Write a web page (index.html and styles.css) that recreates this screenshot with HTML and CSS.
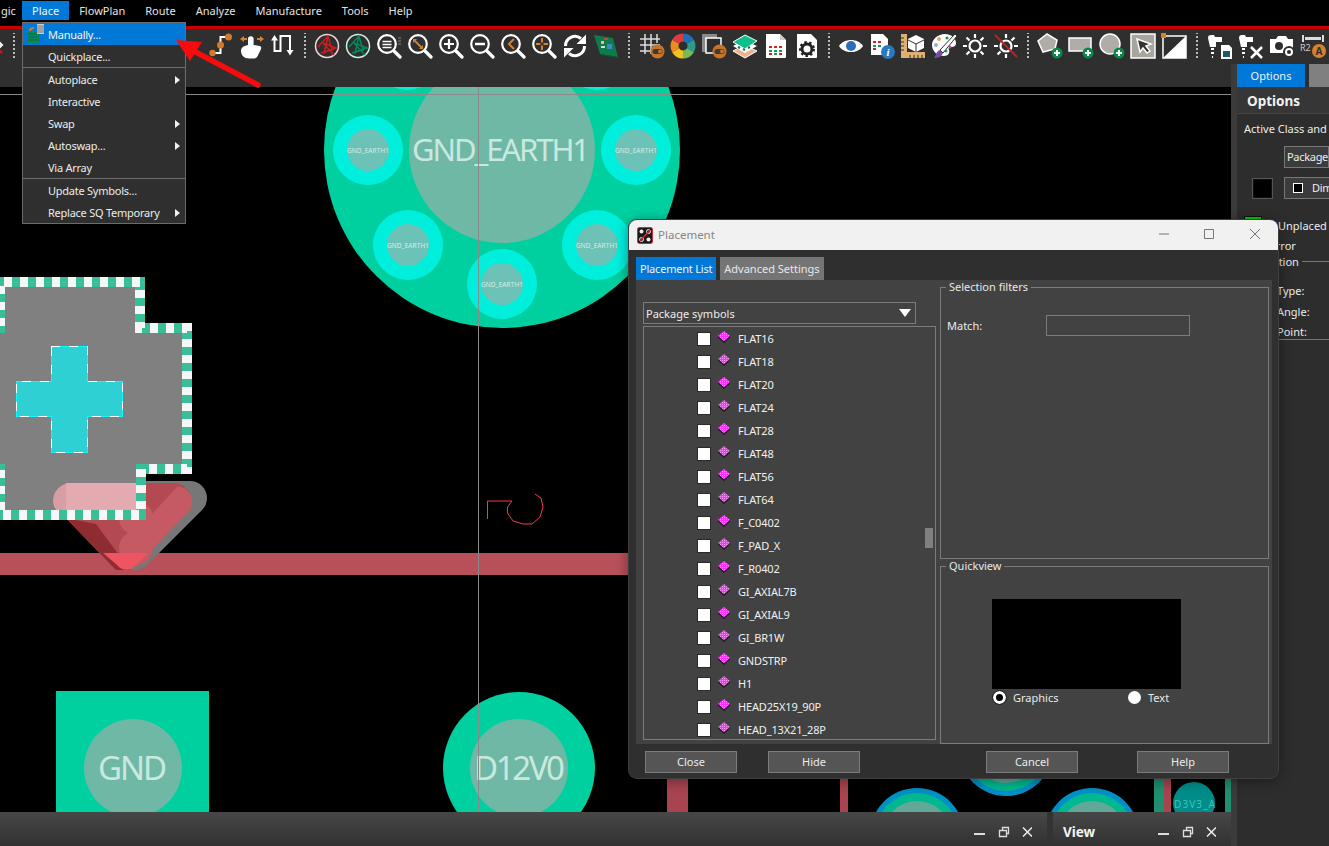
FILE: index.html
```html
<!DOCTYPE html>
<html lang="en">
<head>
<meta charset="utf-8">
<title>Placement</title>
<link rel="stylesheet" href="styles.css">
</head>
<body>
<svg class="defs" aria-hidden="true">
  <defs>
    <pattern id="dither" width="2" height="2" patternUnits="userSpaceOnUse">
      <rect width="2" height="2" fill="#ff30ff"/><rect width="1" height="1" fill="#ff90ff"/>
    </pattern>
    <symbol id="pkg" viewBox="0 0 12 12">
      <path d="M0 6.500 6 12l6-5.500V5H0z" fill="#111"/>
      <path d="M6 0l6 5-6 5.500L0 5z" fill="url(#dither)"/>
    </symbol>
    <symbol id="mag" viewBox="0 0 26 26">
      <circle cx="11" cy="11" r="8.800" fill="none" stroke="#fff" stroke-width="2.200"/>
      <path d="M18 18l6 6" stroke="#fff" stroke-width="3.200" stroke-linecap="round"/>
    </symbol>
    <symbol id="plus" viewBox="0 0 26 26">
      <circle cx="20" cy="20" r="5.500" fill="#0a8a4a"/>
      <path d="M17 20h6M20 17v6" stroke="#fff" stroke-width="2"/>
    </symbol>
    <symbol id="toggle" viewBox="0 0 26 26">
      <circle cx="18.500" cy="18.500" r="7" fill="#c87428"/>
      <rect x="13.500" y="16" width="10" height="5" rx="2.500" fill="#3a3a3a"/>
      <circle cx="21" cy="18.500" r="2" fill="#c87428"/>
    </symbol>
  </defs>
</svg>

<div class="app">
  <nav class="menubar">
    <span class="menubar-item menubar-first">gic</span>
    <span class="menubar-item menubar-active">Place</span>
    <span class="menubar-item">FlowPlan</span>
    <span class="menubar-item">Route</span>
    <span class="menubar-item">Analyze</span>
    <span class="menubar-item">Manufacture</span>
    <span class="menubar-item">Tools</span>
    <span class="menubar-item">Help</span>
  </nav>
  <div class="redline"></div>

  <div class="toolbar">
    <span class="cut-icon"><svg width="14" height="26" viewBox="0 0 14 26"><path d="M-4 6l6 6-6 6" fill="none" stroke="#fff" stroke-width="2"/><path d="M-4 14l6 6" stroke="#d01818" stroke-width="2"/></svg></span>
    <i class="tsep"></i>
    <span class="tool tool-after-menu"><svg class="ico" viewBox="0 0 26 26"><path d="M6.500 20h6v-8" fill="none" stroke="#fff" stroke-width="2"/><path d="M12.500 9V4h6" fill="none" stroke="#fff" stroke-width="2"/><circle cx="4.500" cy="20" r="3.200" fill="#d07a2a"/><circle cx="12.500" cy="12" r="3.500" fill="#d07a2a"/><circle cx="20.500" cy="4" r="3.500" fill="#d07a2a"/></svg></span>
    <span class="tool"><svg class="ico" viewBox="0 0 26 26"><path d="M1 6l4-3v2h3v2H5v2zM25 6l-4-3v2h-3v2h3v2z" fill="#d8812c"/><path d="M9 6a2.800 2.800 0 0 1 5.600 0v6l6 1c2 .5 2 2 1 4l-3 6c-1 2-2 2.500-5 2.500H10C5 25.500 2 22 2 18c0-3 2-5 7-6z" fill="#fff"/></svg></span>
    <span class="tool"><svg class="ico" viewBox="0 0 26 26"><path d="M4.500 6V18H10.500V3H20V18" fill="none" stroke="#fff" stroke-width="2"/><path d="M1 7.500h7L4.500 2zM16.500 17h7L20 22.500z" fill="#fff"/></svg></span>
    <i class="tsep"></i>
    <span class="tool"><svg class="ico" viewBox="0 0 26 26"><circle cx="13" cy="13" r="11.500" fill="#2e2e2e" stroke="#f2d6d6" stroke-width="1.500"/><path d="M4 14L14 3l4 14L7 20l15-5L9 10l11 12M14 3l-4 18" fill="none" stroke="#cc1b23" stroke-width="1.500"/></svg></span>
    <span class="tool"><svg class="ico" viewBox="0 0 26 26"><circle cx="13" cy="13" r="11.500" fill="#2e2e2e" stroke="#d2efe2" stroke-width="1.500"/><path d="M4 14L14 3l4 14L7 20l15-5L9 10l11 12M14 3l-4 18" fill="none" stroke="#008a5a" stroke-width="1.500"/></svg></span>
    <span class="tool"><svg class="ico" viewBox="0 0 26 26"><use href="#mag"/><path d="M6.500 8.500h9M6.500 11.500h9M6.500 14.500h9" stroke="#fff" stroke-width="1.500"/><path d="M22 5h3M22 8h3M22 11h3" stroke="#888" stroke-width="1"/></svg></span>
    <span class="tool"><svg class="ico" viewBox="0 0 26 26"><use href="#mag"/><path d="M7 7l8 8" stroke="#d8812c" stroke-width="1.800"/><path d="M6 6h4L6 10zM16 16h-4l4-4z" fill="#d8812c"/></svg></span>
    <span class="tool"><svg class="ico" viewBox="0 0 26 26"><use href="#mag"/><path d="M6 11h10M11 6v10" stroke="#fff" stroke-width="2.200"/></svg></span>
    <span class="tool"><svg class="ico" viewBox="0 0 26 26"><use href="#mag"/><path d="M6 11h10" stroke="#fff" stroke-width="2.500"/></svg></span>
    <span class="tool"><svg class="ico" viewBox="0 0 26 26"><use href="#mag"/><path d="M14 6l-5 5 5 5" fill="none" stroke="#d8812c" stroke-width="2"/></svg></span>
    <span class="tool"><svg class="ico" viewBox="0 0 26 26"><use href="#mag"/><path d="M5 11h4.500M12.500 11H17M11 5v4.500M11 12.500V17" stroke="#d8812c" stroke-width="2"/></svg></span>
    <span class="tool"><svg class="ico" viewBox="0 0 26 26"><path d="M3.500 13A9.500 9.500 0 0 1 19 5.500M22.500 13A9.500 9.500 0 0 1 7 20.500" fill="none" stroke="#fff" stroke-width="3"/><path d="M24 1.500V11H14.500zM2 24.500V15h9.500z" fill="#fff"/></svg></span>
    <span class="tool"><svg class="ico" viewBox="0 0 26 26"><path d="M1 2l19 3 5 19-18-3z" fill="#0e7a4e"/><path d="M7 21l18 3v1L7 22z" fill="#0a5a38"/><rect x="8" y="8" width="3" height="3" fill="#e8c840"/><rect x="14" y="11" width="5" height="5" fill="#3a8ac8"/><rect x="11" y="5" width="4" height="2" fill="#c84838"/><rect x="8" y="13" width="4" height="2" fill="#d8d8d8"/></svg></span>
    <i class="tsep tsep-wide"></i>
    <span class="tool"><svg class="ico" viewBox="0 0 26 26"><path d="M1 6h20M1 12h20M1 18h12M6 1v20M12 1v20M18 1v9" stroke="#ddd" stroke-width="1.500"/><use href="#toggle"/></svg></span>
    <span class="tool"><svg class="ico" viewBox="0 0 26 26"><g fill="none" stroke-width="8" transform="rotate(-90 13 13)"><circle cx="13" cy="13" r="8.500" stroke="#1f6fb8" pathLength="6" stroke-dasharray="1 5"/><circle cx="13" cy="13" r="8.500" stroke="#2f9a8a" pathLength="6" stroke-dasharray="1 5" stroke-dashoffset="-1"/><circle cx="13" cy="13" r="8.500" stroke="#72bc5c" pathLength="6" stroke-dasharray="1 5" stroke-dashoffset="-2"/><circle cx="13" cy="13" r="8.500" stroke="#f2c020" pathLength="6" stroke-dasharray="1 5" stroke-dashoffset="-3"/><circle cx="13" cy="13" r="8.500" stroke="#ee8a20" pathLength="6" stroke-dasharray="1 5" stroke-dashoffset="-4"/><circle cx="13" cy="13" r="8.500" stroke="#e03a40" pathLength="6" stroke-dasharray="1 5" stroke-dashoffset="-5"/></g><circle cx="13" cy="13" r="3" fill="#2e2e2e"/></svg></span>
    <span class="tool"><svg class="ico" viewBox="0 0 26 26"><rect x="1" y="1" width="15" height="18" fill="#8a8a8a"/><rect x="5" y="5" width="15" height="15" fill="#2e2e2e" stroke="#fff" stroke-width="1.500"/><use href="#toggle"/></svg></span>
    <span class="tool"><svg class="ico" viewBox="0 0 26 26"><path d="M1 18l11-6 13 6-12 7z" fill="#eeb28c" stroke="#fff"/><path d="M1 13l11-6 13 6-12 7z" fill="#fff"/><path d="M1 9l12-7 12 6-12 8z" fill="#0cbf8c" stroke="#fff"/><path d="M6 14l2 1M11 16l2 1M16 15l2-1" stroke="#0a7a58" stroke-width="2"/></svg></span>
    <span class="tool"><svg class="ico" viewBox="0 0 26 26"><path d="M3 1h14l6 6v17a1 1 0 0 1-1 1H3z" fill="#fff"/><path d="M17 1v6h6" fill="#ccc"/><path d="M6 13h3v2H6zM11 13h3v2h-3zM16 13h3v2h-3zM6 20h3v2H6zM16 20h3v2h-3z" fill="#d02020"/><path d="M6 17h3v2H6zM11 17h3v2h-3zM16 17h3v2h-3zM11 20h3v2h-3z" fill="#1a9a50"/></svg></span>
    <span class="tool"><svg class="ico" viewBox="0 0 26 26"><path d="M3 1h14l6 6v17a1 1 0 0 1-1 1H3z" fill="#fff"/><circle cx="13" cy="16" r="5" fill="none" stroke="#222" stroke-width="3"/><circle cx="13" cy="16" r="7" fill="none" stroke="#222" stroke-width="2" stroke-dasharray="2.500 2.500"/></svg></span>
    <i class="tsep"></i>
    <span class="tool"><svg class="ico" viewBox="0 0 26 26"><path d="M1 13C6 5 20 5 25 13 20 21 6 21 1 13z" fill="#fff"/><circle cx="13" cy="13" r="5" fill="#2a6fb8"/></svg></span>
    <span class="tool"><svg class="ico" viewBox="0 0 26 26"><path d="M2 1h12l5 5v16H2z" fill="#fff"/><path d="M4 8h3v2H4zM9 8h3v2H9zM4 15h3v2H4z" fill="#d02020"/><path d="M4 12h3v2H4zM9 12h3v2H9z" fill="#1a9a50"/><circle cx="19" cy="19" r="7" fill="#2a78c0"/><text class="info-i" x="19" y="23">i</text></svg></span>
    <span class="tool"><svg class="ico" viewBox="0 0 26 26"><path d="M1 1h6v18h18v6H1z" fill="#e0b070"/><path d="M1 5h3M1 9h3M1 13h3M1 17h3M10 25v-3M14 25v-3M18 25v-3M22 25v-3" stroke="#333"/><path d="M16 2l8 4v9l-8 4-8-4V6z" fill="#fff"/><path d="M16 11v8M8 7l8 4 8-4" stroke="#333" fill="none"/></svg></span>
    <span class="tool"><svg class="ico" viewBox="0 0 26 26"><path d="M14 1c6 0 11 4 11 9 0 3-2 4-5 4-2 0-3 1-2 3 1 3-1 6-5 6C6 23 1 18 1 12S7 1 14 1z" fill="#fff"/><path d="M24 1L9 17l3 3L26 3z" fill="#fff" stroke="#2e2e2e"/><path d="M9 17l3 3c-1 3-4 5-9 5 2-2 2-7 6-8z" fill="#7a4aa8"/><circle cx="8" cy="6" r="2" fill="#d8a860"/><circle cx="16" cy="5" r="1.500" fill="#0a9a60"/><circle cx="5" cy="12" r="2" fill="#9ab0d0"/><circle cx="19" cy="14" r="1.500" fill="#b050b0"/><circle cx="15" cy="18" r="1.500" fill="#0a9a60"/></svg></span>
    <span class="tool"><svg class="ico" viewBox="0 0 26 26"><circle cx="13" cy="13" r="5.500" fill="none" stroke="#fff" stroke-width="2.200"/><path d="M13 1v4M13 21v4M1 13h4M21 13h4M4.500 4.500l3 3M18.500 18.500l3 3M21.500 4.500l-3 3M7.500 18.500l-3 3" stroke="#fff" stroke-width="2.200"/></svg></span>
    <span class="tool"><svg class="ico" viewBox="0 0 26 26"><circle cx="13" cy="13" r="5.500" fill="none" stroke="#fff" stroke-width="2.200"/><path d="M13 1v4M13 21v4M1 13h4M21 13h4M21.500 4.500l-3 3M7.500 18.500l-3 3" stroke="#fff" stroke-width="2.200"/><path d="M2 2l22 22" stroke="#cc1b23" stroke-width="2"/></svg></span>
    <i class="tsep"></i>
    <span class="tool"><svg class="ico" viewBox="0 0 26 26"><path d="M10 1l10 6-2 9-12 3-5-11z" fill="#b0aca8" stroke="#fff" stroke-width="1.500"/><use href="#plus"/></svg></span>
    <span class="tool"><svg class="ico" viewBox="0 0 26 26"><rect x="1" y="5" width="22" height="13" fill="#b0aca8" stroke="#fff" stroke-width="1.500"/><use href="#plus"/></svg></span>
    <span class="tool"><svg class="ico" viewBox="0 0 26 26"><circle cx="11" cy="11" r="10" fill="#b0aca8" stroke="#fff" stroke-width="1.500"/><use href="#plus"/></svg></span>
    <span class="tool"><svg class="ico" viewBox="0 0 26 26"><rect x="1" y="1" width="24" height="24" fill="#a8a49e" stroke="#fff" stroke-width="1.500"/><path d="M7 6l14 5-5 2 4 5-3 2-4-5-3 4z" fill="#333" stroke="#fff" stroke-width="1.500"/></svg></span>
    <span class="tool"><svg class="ico" viewBox="0 0 26 26"><path d="M2 3h23v22H2z" fill="#2e2e2e" stroke="#fff" stroke-width="1.500"/><path d="M25 3v22H2z" fill="#fff"/><rect x="0" y="0" width="5" height="5" fill="#d8812c"/></svg></span>
    <i class="tsep tsep-wide"></i>
    <span class="tool"><svg class="ico" viewBox="0 0 26 26"><path d="M1 5c0-2 1-3 3-3h3l1 2h7v5H9v5H3z" fill="#fff"/><path d="M4 15h3v2H4zM4 19h3v2H4zM5 23h1v2H5z" fill="#fff"/><path d="M14 12h8l3 3v11H14z" fill="#fff"/><path d="M16 18h7v6h-7z" fill="#1a5a6a"/></svg></span>
    <span class="tool"><svg class="ico" viewBox="0 0 26 26"><path d="M1 5c0-2 1-3 3-3h3l1 2h7v5H9v5H3z" fill="#fff"/><path d="M4 15h3v2H4zM4 19h3v2H4zM5 23h1v2H5z" fill="#fff"/><path d="M13 14l11 11M24 14L13 25" stroke="#fff" stroke-width="2.500"/></svg></span>
    <span class="tool"><svg class="ico" viewBox="0 0 26 26"><path d="M1 6h6l2-3h8l2 3h5v14H1z" fill="#fff"/><circle cx="10" cy="13" r="4" fill="#2e2e2e"/><circle cx="20" cy="19" r="6" fill="#2e2e2e"/><circle cx="20" cy="19" r="3" fill="none" stroke="#fff" stroke-width="2"/></svg></span>
    <span class="tool"><svg class="ico" viewBox="0 0 26 26"><path d="M2 2h2v7H2zM22 2h2v7h-2zM5 4h16v3H5z" fill="#ddd"/><text class="r2-text" x="0" y="18">R2</text><circle cx="19" cy="18" r="7" fill="#d8812c"/><text class="a-text" x="19" y="22">A</text></svg></span>
  </div>

  <div class="workspace">
    <div class="center">
      <div class="canvas">
        <svg class="board" width="1231" height="725" viewBox="0 87 1231 725">
          <rect x="0" y="87" width="1231" height="725" fill="#000"/>
          <!-- large mounting pad -->
          <circle cx="502" cy="150" r="178" fill="#00d0a0"/>
          <circle cx="502" cy="150" r="93" fill="#6fb8a6"/>
          <g fill="#00efdd">
            <circle cx="407" cy="55" r="35"/><circle cx="597" cy="55" r="35"/>
            <circle cx="368" cy="150" r="35"/><circle cx="636" cy="150" r="35"/>
            <circle cx="408" cy="245" r="35"/><circle cx="597" cy="245" r="35"/>
            <circle cx="502" cy="284" r="35"/>
          </g>
          <g fill="#6dc2b8">
            <circle cx="368" cy="150" r="21"/><circle cx="636" cy="150" r="21"/>
            <circle cx="408" cy="245" r="21"/><circle cx="597" cy="245" r="21"/>
            <circle cx="502" cy="284" r="21"/>
          </g>
          <text class="pad-big" x="412" y="161" textLength="178">GND_EARTH1</text>
          <g class="pad-tiny">
            <text x="347" y="153" textLength="42">GND_EARTH1</text>
            <text x="615" y="153" textLength="42">GND_EARTH1</text>
            <text x="387" y="248" textLength="42">GND_EARTH1</text>
            <text x="576" y="248" textLength="42">GND_EARTH1</text>
            <text x="481" y="287" textLength="42">GND_EARTH1</text>
          </g>

          <!-- trace and triangular copper -->
          <rect x="0" y="553" width="640" height="22" fill="#b8505a"/>
          <path d="M100 498H190L135 553z" fill="#777" stroke="#777" stroke-width="34" stroke-linejoin="round"/>
          <path d="M72 500h102l-51 53z" fill="#b34a52" stroke="#b34a52" stroke-width="34" stroke-linejoin="round"/>
          <path d="M66 518l50 52h14l-34-46z" fill="#8e2c32"/>
          <path d="M178 486a16 16 0 0 1 12 24L142 560l-18-16z" fill="#c55a63"/>
          <circle cx="136" cy="518" r="17" fill="#c55a63"/>
          <circle cx="136" cy="548" r="17" fill="#c55a63"/>
          <path d="M103 553h45l-12 12a12 12 0 0 1-19 0z" fill="#ee5560"/>

          <!-- plus-shaped pad -->
          <path d="M-30 328H0V282H140V328H187V469H141V515H0V469H-30Z" fill="#808080"/>
          <path d="M53 501a18 18 0 0 1 18-18H136V518H71a18 18 0 0 1-18-18z" fill="#d79ea3"/>
          <path d="M66 483H136V518H66z" fill="#e3abb1"/>
          <path d="M-30 328H0V282H140V328H187V469H141V515H0V469H-30Z" fill="none" stroke="#38bf98" stroke-width="10"/>
          <path d="M-30 328H0V282H140V328H187V469H141V515H0V469H-30Z" fill="none" stroke="#f6f6f6" stroke-width="10" stroke-dasharray="8 8"/>
          <path class="crisp" d="M51 346H87V381H122V416H87V452H51V416H16V381H51Z" fill="#2ed0d4" stroke="#0ff"/>
          <path class="crisp" d="M51 346H87V381H122V416H87V452H51V416H16V381H51Z" fill="none" stroke="#fff" stroke-dasharray="9 9"/>

          <!-- cursor ghost -->
          <path d="M487.500 519V501H512L507.500 507V513L513 521 523 524 532 524 540 517 543 507 541 498 535 494" fill="none" stroke="#f43c4c" stroke-width="1"/>

          <!-- lower pads -->
          <rect x="56" y="691" width="153" height="125" fill="#00d0a0"/>
          <circle cx="133" cy="768" r="49" fill="#6fb8a6"/>
          <text class="pad-mid" x="98" y="780" textLength="69">GND</text>
          <circle cx="519" cy="768" r="76" fill="#00d0a0"/>
          <circle cx="519" cy="768" r="49" fill="#6fb8a6"/>
          <text class="pad-mid" x="474" y="780" textLength="91">D12V0</text>

          <rect x="667" y="770" width="21" height="45" fill="#a84450"/>
          <rect x="840" y="770" width="8" height="45" fill="#a84450"/>
          <g>
            <circle cx="917" cy="835" r="47" fill="#0090c8"/><circle cx="917" cy="835" r="42" fill="#00b890"/><circle cx="917" cy="835" r="34" fill="#62a896"/>
            <circle cx="1006" cy="749" r="47" fill="#0090c8"/><circle cx="1006" cy="749" r="42" fill="#00b890"/><circle cx="1006" cy="749" r="34" fill="#62a896"/>
            <circle cx="1092" cy="835" r="47" fill="#0090c8"/><circle cx="1092" cy="835" r="42" fill="#00b890"/><circle cx="1092" cy="835" r="34" fill="#62a896"/>
          </g>
          <rect x="1154" y="770" width="10" height="45" fill="#1f8f6f"/>
          <rect x="1164" y="770" width="7" height="45" fill="#a84450"/>
          <rect x="1225" y="770" width="6" height="45" fill="#1f8f6f"/>
          <circle cx="1194" cy="803" r="21" fill="#008c8a"/>
          <text class="pad-small" x="1174" y="808" textLength="41">D3V3_A</text>

          <rect x="0" y="94" width="1231" height="1" fill="#8a8a8a"/>
          <rect x="478" y="87" width="1" height="725" fill="#8a8a8a"/>
        </svg>
      </div>
      <div class="docks">
        <div class="dock dock-main">
          <span class="dock-title"></span>
          <span class="dock-controls"><svg width="58" height="16" viewBox="0 0 58 16"><path d="M0 10h11" stroke="#ddd" stroke-width="2"/><path d="M25.500 6.500h7v6h-7zM28.500 6.500v-3h6v6h-2" fill="none" stroke="#ddd" stroke-width="1.300"/><path d="M49 3.500l9 9M58 3.500l-9 9" stroke="#eee" stroke-width="1.500"/></svg></span>
        </div>
        <div class="dock dock-view">
          <span class="dock-title">View</span>
          <span class="dock-controls"><svg width="58" height="16" viewBox="0 0 58 16"><path d="M0 10h11" stroke="#ddd" stroke-width="2"/><path d="M25.500 6.500h7v6h-7zM28.500 6.500v-3h6v6h-2" fill="none" stroke="#ddd" stroke-width="1.300"/><path d="M49 3.500l9 9M58 3.500l-9 9" stroke="#eee" stroke-width="1.500"/></svg></span>
        </div>
      </div>
    </div>

    <aside class="side">
      <div class="side-tabs">
        <span class="side-tab-active">Options</span>
        <span class="side-tab-other"></span>
      </div>
      <h2 class="side-title">Options</h2>
      <div class="side-body">
        <div class="side-label">Active Class and</div>
        <div class="side-box side-box-pkg">Package</div>
        <div class="side-row">
          <span class="swatch"></span>
          <div class="side-box side-box-dim"><i class="side-check"></i>Dim</div>
        </div>
        <div class="side-unplaced"><span class="swatch-green"></span>Unplaced</div>
        <div class="side-line side-mirror">Mirror</div>
        <div class="side-line side-rule">Rotation</div>
        <div class="side-field side-field-first">Type:</div>
        <div class="side-field">Angle:</div>
        <div class="side-field side-last">Point:</div>
      </div>
    </aside>
  </div>

  <!-- Place menu -->
  <div class="menu">
    <div class="menu-item menu-item-active menu-item-top">
      <svg class="menu-ico" width="20" height="21" viewBox="0 0 20 21"><rect x="2" y="9" width="13" height="11" fill="#0a8a5a"/><path d="M3 11h11M3 14h11M3 17h11" stroke="#0a6a48"/><path d="M9 5c-3 0-4 1-4 3" fill="none" stroke="#d07a2a" stroke-width="2"/><rect x="12" y="1" width="7" height="10" fill="#ccc"/><path d="M12 3h7M12 5h7M12 7h7M12 9h7" stroke="#777"/></svg>
      Manually...
    </div>
    <div class="menu-item menu-item-top">Quickplace...</div>
    <hr class="menu-sep">
    <div class="menu-item menu-sub">Autoplace</div>
    <div class="menu-item">Interactive</div>
    <div class="menu-item menu-sub">Swap</div>
    <div class="menu-item menu-sub">Autoswap...</div>
    <div class="menu-item">Via Array</div>
    <hr class="menu-sep menu-sep-tight">
    <div class="menu-item">Update Symbols...</div>
    <div class="menu-item menu-sub">Replace SQ Temporary</div>
  </div>

  <!-- annotation arrow -->
  <svg class="annotation" width="100" height="60" viewBox="0 0 100 60">
    <path d="M12 12L82 49" fill="none" stroke="#f50d0d" stroke-width="5.500" stroke-linecap="round"/>
    <path d="M0 4L26 6 14 25z" fill="#f50d0d"/>
  </svg>

  <!-- Placement dialog -->
  <section class="dialog">
    <header class="dlg-title">
      <svg class="dlg-logo" width="16" height="17" viewBox="0 0 16 17"><rect x=".5" y=".5" width="15" height="16" rx="2" fill="#1a1a1a" stroke="#d0283c"/><circle cx="4.500" cy="4.500" r="2" fill="#eee"/><circle cx="11.500" cy="4.500" r="2" fill="none" stroke="#eee"/><circle cx="4.500" cy="12.500" r="2" fill="none" stroke="#eee"/><circle cx="11.500" cy="12.500" r="2" fill="#eee"/><path d="M3 14L13 3" stroke="#d0283c" stroke-width="1.500"/></svg>
      <span class="dlg-name">Placement</span>
      <span class="dlg-controls">
        <svg width="102" height="12" viewBox="0 0 102 12"><path d="M0 6h10" stroke="#777"/><path d="M45.500 1.500h9v9h-9z" fill="none" stroke="#777"/><path d="M91 1l10 10M101 1L91 11" stroke="#777"/></svg>
      </span>
    </header>

    <div class="dlg-tabs">
      <span class="dlg-tab dlg-tab-active">Placement List</span>
      <span class="dlg-tab">Advanced Settings</span>
    </div>

    <div class="dlg-body">
      <div class="dlg-left">
        <div class="dropdown">Package symbols<i class="dropdown-arrow"></i></div>
        <div class="list">
          <div class="row"><i class="chk"></i><svg class="pkg"><use href="#pkg"/></svg>FLAT16</div>
          <div class="row"><i class="chk"></i><svg class="pkg"><use href="#pkg"/></svg>FLAT18</div>
          <div class="row"><i class="chk"></i><svg class="pkg"><use href="#pkg"/></svg>FLAT20</div>
          <div class="row"><i class="chk"></i><svg class="pkg"><use href="#pkg"/></svg>FLAT24</div>
          <div class="row"><i class="chk"></i><svg class="pkg"><use href="#pkg"/></svg>FLAT28</div>
          <div class="row"><i class="chk"></i><svg class="pkg"><use href="#pkg"/></svg>FLAT48</div>
          <div class="row"><i class="chk"></i><svg class="pkg"><use href="#pkg"/></svg>FLAT56</div>
          <div class="row"><i class="chk"></i><svg class="pkg"><use href="#pkg"/></svg>FLAT64</div>
          <div class="row"><i class="chk"></i><svg class="pkg"><use href="#pkg"/></svg>F_C0402</div>
          <div class="row"><i class="chk"></i><svg class="pkg"><use href="#pkg"/></svg>F_PAD_X</div>
          <div class="row"><i class="chk"></i><svg class="pkg"><use href="#pkg"/></svg>F_R0402</div>
          <div class="row"><i class="chk"></i><svg class="pkg"><use href="#pkg"/></svg>GI_AXIAL7B</div>
          <div class="row"><i class="chk"></i><svg class="pkg"><use href="#pkg"/></svg>GI_AXIAL9</div>
          <div class="row"><i class="chk"></i><svg class="pkg"><use href="#pkg"/></svg>GI_BR1W</div>
          <div class="row"><i class="chk"></i><svg class="pkg"><use href="#pkg"/></svg>GNDSTRP</div>
          <div class="row"><i class="chk"></i><svg class="pkg"><use href="#pkg"/></svg>H1</div>
          <div class="row"><i class="chk"></i><svg class="pkg"><use href="#pkg"/></svg>HEAD25X19_90P</div>
          <div class="row"><i class="chk"></i><svg class="pkg"><use href="#pkg"/></svg>HEAD_13X21_28P</div>
          <i class="scroll-thumb"></i>
        </div>
      </div>
      <div class="dlg-right">
        <fieldset class="group group-filters">
          <legend>Selection filters</legend>
          <div class="match"><label class="match-label">Match:</label><span class="match-input"></span></div>
        </fieldset>
        <fieldset class="group group-quick">
          <legend>Quickview</legend>
          <div class="preview"></div>
          <div class="radios">
            <span class="radio radio-on"></span><span class="radio-text radio-text-first">Graphics</span>
            <span class="radio"></span><span class="radio-text">Text</span>
          </div>
        </fieldset>
      </div>
    </div>

    <footer class="dlg-buttons">
      <span class="btn">Close</span>
      <span class="btn">Hide</span>
      <span class="btn btn-cancel">Cancel</span>
      <span class="btn btn-help">Help</span>
    </footer>
  </section>
</div>
</body>
</html>
```
FILE: styles.css
```css
* { box-sizing: border-box; }
html, body { margin: 0; padding: 0; height: 100%; background: #2d2d2d; }
body {
  font-family: "Noto Sans", "Open Sans", "Liberation Sans", sans-serif;
  font-size: 11px;
  color: #ececec;
  overflow: hidden;
}
.defs { position: absolute; width: 0; height: 0; }
.app {
  position: relative;
  width: 1329px;
  height: 846px;
  display: flex;
  flex-direction: column;
  overflow: hidden;
}

/* menu bar */
.menubar {
  flex: none;
  height: 26px;
  background: #000;
  display: flex;
  align-items: flex-start;
  padding-top: 1px;
}
.menubar-item {
  height: 19px;
  line-height: 19px;
  padding: 0 10px;
  color: #e4e4e4;
  white-space: nowrap;
}
.menubar-first {
  width: 22px;
  padding: 0 0 0 1px;
}
.menubar-active { background: #0078d7; color: #f4f4f4; }
.redline { flex: none; height: 3px; background: #c80000; }

/* toolbar */
.toolbar {
  flex: none;
  height: 58px;
  background: #2f2f2f;
  display: flex;
  align-items: flex-start;
  padding-top: 4px;
}
.cut-icon { width: 7px; height: 26px; overflow: hidden; display: block; }
.tool {
  flex: none;
  width: 31px;
  height: 26px;
  display: flex;
  justify-content: center;
}
.tool-after-menu { margin-left: 185px; }
.ico { width: 26px; height: 26px; display: block; }
.tsep {
  flex: none;
  width: 13px;
  height: 26px;
  background-image: linear-gradient(#bbb 50%, transparent 50%);
  background-size: 2px 4px;
  background-repeat: repeat-y;
  background-position: center;
}
.tsep-wide { width: 15px; }
.info-i { font: italic bold 11px "Liberation Serif", serif; fill: #fff; text-anchor: middle; }
.r2-text { font-size: 9px; fill: #ccc; }
.a-text { font-size: 10px; font-weight: 700; fill: #2e2e2e; text-anchor: middle; }

/* workspace */
.workspace { flex: 1; min-height: 0; display: flex; }
.center { width: 1231px; display: flex; flex-direction: column; }
.canvas { flex: 1; min-height: 0; background: #000; overflow: hidden; }
.board { display: block; font-family: "Noto Sans", sans-serif; }
.crisp { shape-rendering: crispEdges; }
.pad-big { font-size: 31px; fill: #c9e9df; }
.pad-mid { font-size: 33px; fill: #c9e9df; }
.pad-small { font-size: 10px; fill: #3cc4bc; }
.pad-tiny text { font-size: 6.500px; fill: #d5ece6; }

.docks {
  flex: none;
  height: 34px;
  display: flex;
  gap: 6px;
  background: #333;
}
.dock {
  height: 34px;
  background: linear-gradient(#474747, #323232);
  display: flex;
  align-items: center;
  justify-content: space-between;
  padding: 6px 15px 0 10px;
}
.dock-main { width: 1047px; }
.dock-view { width: 178px; }
.dock-title { font-size: 13.500px; font-weight: 700; color: #f4f4f4; }
.dock-controls { display: block; height: 16px; }
.dock-controls svg { display: block; }

/* side panel */
.side {
  position: relative;
  width: 98px;
  margin-top: -23px;
  border-left: 6px solid #3b3b3b;
  background: #2d2d2d;
  overflow: hidden;
}
.side-tabs { display: flex; gap: 4px; height: 23px; }
.side-tab-active {
  flex: none;
  width: 68px;
  background: #0078d7;
  text-align: center;
  line-height: 23px;
  color: #f0f0f0;
}
.side-tab-other { flex: 1; background: #808080; }
.side-title {
  margin: 0;
  height: 27px;
  padding: 1px 0 0 10px;
  font-size: 13.500px;
  line-height: 27px;
  font-weight: 700;
  color: #f2f2f2;
  background: #363636;
  border-bottom: 1px solid #444;
}
.side-body { padding-left: 7px; white-space: nowrap; }
.side-label { height: 15px; line-height: 15px; margin-top: 7px; }
.side-box {
  height: 22px;
  line-height: 20px;
  border: 1px solid #777;
  background: #3c3c3c;
  padding-left: 3px;
}
.side-box-pkg { margin: 10px 0 0 40px; padding-left: 2px; letter-spacing: -.3px; }
.side-row { display: flex; align-items: center; margin-top: 9px; }
.swatch { flex: none; width: 19px; height: 19px; margin: 0 12px 0 9px; background: #000; border: 1px solid #111; outline: 1px solid #555; }
.side-box-dim { flex: none; width: 100px; padding-left: 8px; display: flex; align-items: center; letter-spacing: -.3px; }
.side-check { flex: none; width: 10px; height: 10px; margin-right: 9px; background: #000; border: 1px solid #fff; }
.side-unplaced { display: flex; align-items: center; margin-top: 17px; height: 18px; }
.swatch-green { flex: none; width: 18px; height: 18px; margin-right: 16px; background: #0c0; border: 1px solid #111; }
.side-line { height: 15px; line-height: 15px; margin-top: 4px; }
.side-mirror { padding-left: 19px; }
.side-rule { margin-top: 1px; padding-left: 11px; position: relative; }
.side-rule::after { content: ""; position: absolute; left: 58px; right: 0; top: 7px; height: 1px; background: #777; }
.side-field { height: 15px; line-height: 15px; margin-top: 6px; padding-left: 33px; }
.side-field-first { margin-top: 14px; }
.side-last { height: 16px; margin-top: 5px; border-bottom: 1px solid #777; }

/* dropdown menu */
.menu {
  position: absolute;
  left: 22px;
  top: 22px;
  width: 164px;
  height: 202px;
  background: #2f2f2f;
  border: 1px solid #6c6c6c;
  overflow: hidden;
  z-index: 5;
}
.menu-item {
  position: relative;
  height: 22px;
  line-height: 22px;
  padding-left: 25px;
  color: #ececec;
  letter-spacing: -.25px;
  white-space: nowrap;
}
.menu-item-top { padding-top: 1px; line-height: 21px; }
.menu-item-active { background: #0078d7; color: #f4f4f4; }
.menu-ico { position: absolute; left: 2px; top: 0; }
.menu-sub::after {
  content: "";
  position: absolute;
  right: 5px;
  top: 7px;
  border-left: 5px solid #f2f2f2;
  border-top: 4px solid transparent;
  border-bottom: 4px solid transparent;
}
.menu-sep { margin: 0 0 1px; height: 1px; border: 0; background: #6c6c6c; }
.menu-sep-tight { margin: -1px 0 1px; }
.annotation { position: absolute; left: 176px; top: 36px; z-index: 6; }

/* dialog */
.dialog {
  position: absolute;
  left: 629px;
  top: 220px;
  width: 649px;
  height: 558px;
  background: #2f2f2f;
  border-radius: 8px;
  box-shadow: 0 0 0 1px #3f3f3f, 0 2px 14px rgba(0, 0, 0, .45);
  display: flex;
  flex-direction: column;
  overflow: hidden;
  z-index: 4;
}
.dlg-title {
  flex: none;
  height: 30px;
  background: #f1f1f1;
  display: flex;
  align-items: center;
  padding-left: 8px;
}
.dlg-logo { flex: none; }
.dlg-name { margin-left: 5px; margin-top: -2px; color: #858585; font-size: 11.500px; }
.dlg-controls { margin-left: auto; margin-right: 17px; margin-top: -2px; height: 12px; }
.dlg-controls svg { display: block; }
.dlg-tabs { flex: none; height: 30px; padding: 7px 0 0 7px; display: flex; gap: 4px; }
.dlg-tab {
  height: 23px;
  line-height: 23px;
  padding: 0 4px;
  background: #757575;
  color: #e8e8e8;
  white-space: nowrap;
}
.dlg-tab-active { background: #0078d7; color: #f4f4f4; letter-spacing: -.2px; }
.dlg-body {
  flex: none;
  height: 464px;
  margin: 0 6px 0 7px;
  background: #424242;
  display: flex;
}
.dlg-left { flex: none; width: 304px; padding: 22px 0 0 7px; }
.dropdown {
  position: relative;
  width: 273px;
  height: 22px;
  line-height: 22px;
  border: 1px solid #7c7c7c;
  padding-left: 2px;
}
.dropdown-arrow {
  position: absolute;
  right: 4px;
  top: 6px;
  border-top: 8px solid #fff;
  border-left: 6px solid transparent;
  border-right: 6px solid transparent;
}
.list {
  position: relative;
  width: 293px;
  height: 414px;
  margin-top: 2px;
  border: 1px solid #7c7c7c;
  overflow: hidden;
}
.row {
  display: flex;
  align-items: center;
  height: 23px;
  padding-left: 54px;
  color: #f0f0f0;
  letter-spacing: -.15px;
  white-space: nowrap;
}
.chk {
  flex: none;
  width: 12px;
  height: 12px;
  background: #fff;
  box-shadow: 0 0 0 1px #2a2a2a;
  margin-right: 8px;
}
.pkg { flex: none; width: 12px; height: 12px; margin: -3px 8px 0 0; }
.scroll-thumb {
  position: absolute;
  left: 281px;
  top: 201px;
  width: 8px;
  height: 20px;
  background: #808080;
}
.dlg-right { flex: none; width: 329px; }
.group {
  margin: 0;
  padding: 0;
  min-width: 0;
  width: 329px;
  border: 1px solid #7c7c7c;
}
.group legend {
  margin-left: 5px;
  padding: 0 3px;
  height: 14px;
  line-height: 14px;
  color: #e8e8e8;
}
.group-filters { height: 279px; }
.group-quick { height: 185px; }
.match { display: flex; align-items: center; margin-top: 21px; padding-left: 6px; }
.match-label { width: 99px; }
.match-input { width: 144px; height: 21px; border: 1px solid #7c7c7c; background: #424242; }
.preview { width: 189px; height: 90px; margin: 26px 0 0 51px; background: #000; }
.radios { display: flex; align-items: center; height: 17px; margin: 0 0 0 52px; }
.radio { flex: none; width: 13px; height: 13px; border-radius: 50%; background: #fff; }
.radio-on { background: #000; border: 3px solid #fff; outline: 1px solid #222; }
.radio-text { margin-left: 7px; color: #e8e8e8; }
.radio-text-first { width: 115px; }

.dlg-buttons { flex: none; display: flex; gap: 31px; padding: 7px 0 0 16px; }
.btn {
  width: 92px;
  height: 22px;
  line-height: 20px;
  text-align: center;
  background: #555;
  border: 1px solid #7c7c7c;
  color: #ececec;
}
.btn-cancel { margin-left: 95px; }
.btn-help { margin-left: 28px; }
```
